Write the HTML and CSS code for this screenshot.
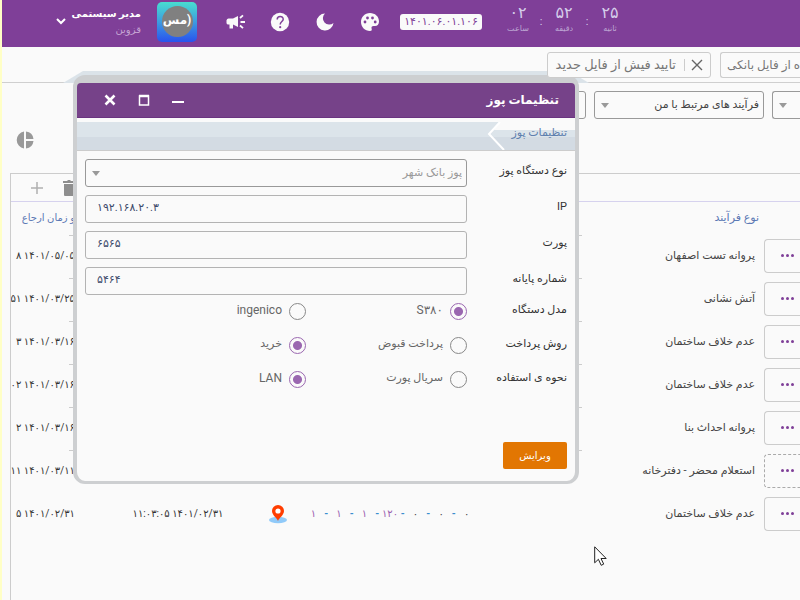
FILE: index.html
```
<!DOCTYPE html>
<html lang="fa" dir="rtl">
<head>
<meta charset="utf-8">
<title>تنظیمات پوز</title>
<link rel="stylesheet" href="styles.css">
</head>
<body>
<header class="topbar">
  <div class="clock">
    <div class="unit"><b>۲۵</b><small>ثانیه</small></div><i>:</i>
    <div class="unit"><b>۵۲</b><small>دقیقه</small></div><i>:</i>
    <div class="unit"><b>۰۲</b><small>ساعت</small></div>
  </div>
  <span class="version" dir="ltr">۱۴۰۱.۰۶.۰۱.۱۰۶</span>
  <nav class="tools">
    <button class="icon" aria-label="پوسته"><svg viewBox="0 0 20 20"><path fill="#fafafa" d="M10 1C4.800 1 1 5 1 10s4 9 9 9c1.600 0 2-1 1.700-2-.7-2 .2-3 1.800-3H15c2.600 0 4-2 4-4.500C19 4.500 15 1 10 1z"/><g fill="#7f3f98"><circle cx="5" cy="10" r="1.400"/><circle cx="7.500" cy="6" r="1.400"/><circle cx="12.500" cy="6" r="1.400"/><circle cx="15.200" cy="10" r="1.400"/></g></svg></button>
    <button class="icon" aria-label="حالت شب"><svg viewBox="0 0 20 20"><path fill="#fafafa" d="M10 1.500A8.500 8.500 0 1 0 18.500 11 5.800 5.800 0 0 1 10 1.500z"/></svg></button>
    <button class="icon" aria-label="راهنما"><svg viewBox="0 0 20 20"><circle cx="10" cy="10" r="9.200" fill="#fafafa"/><path d="M7.200 7.500c0-4 6-3.800 6-.3 0 2.300-3 2.400-3 5.300" fill="none" stroke="#7f3f98" stroke-width="1.500"/><circle cx="10.200" cy="15.200" r="1.100" fill="#7f3f98"/></svg></button>
    <button class="icon" aria-label="اعلان"><svg viewBox="0 0 20 20"><path fill="#fafafa" d="M1.500 8.200Q2 6.500 3.500 6.500H8l5-2.500v11l-5-2.500v4H4.500V12.500h-1Q1.500 12.500 1.500 11z"/><path d="M15.500 10H20M15 6l3-2.600M15 13.500l3 2.600" fill="none" stroke="#fafafa" stroke-width="1.800"/></svg></button>
  </nav>
  <div class="avatar"><span>(مس</span></div>
  <button class="user">
    <span class="who"><strong>مدیر سیستمی</strong><span>قزوین</span></span>
    <svg viewBox="0 0 12 12"><path d="M2 3l4 4 4-4" fill="none" stroke="#fff" stroke-width="2"/></svg>
  </button>
</header>

<div class="tabs">
  <div class="tab cut"><bdi dir="rtl">ه از فایل بانکی</bdi></div>
  <div class="tab">
    <button class="close" aria-label="بستن"><svg viewBox="0 0 12 12"><path d="M1 1l10 10M11 1L1 11" stroke="#666" stroke-width="1.400"/></svg></button>
    <span class="label">تایید فیش از فایل جدید</span>
  </div>
</div>

<main class="page">
  <div class="filters">
    <div class="pick narrow"><select aria-label="وضعیت"><option></option></select></div>
    <div class="pick"><select aria-label="فرآیندها"><option>فرآیند های مرتبط با من</option></select></div>
    <div class="pick"><select aria-label="نوع"><option></option></select></div>
  </div>
  <div class="chart">
    <svg viewBox="0 0 18 18"><path fill="#999" d="M8 .5v17a8.600 8.600 0 0 1 0-17zM10 .5a8.600 8.600 0 0 1 7.500 7.500H10zM10 10h7.500A8.600 8.600 0 0 1 10 17.500z"/></svg>
  </div>
  <section class="grid">
    <div class="gridbar">
      <button aria-label="حذف"><svg viewBox="0 0 16 18"><path fill="#8e8e8e" d="M3 5h10v11q0 1-1 1H4q-1 0-1-1zM2 2h4l1-1h2l1 1h4v2H2z"/></svg></button>
      <button aria-label="افزودن"><svg viewBox="0 0 16 18"><path d="M8 3v12M2 9h12" stroke="#b0b0b0" stroke-width="1.500"/></svg></button>
    </div>
    <table>
      <colgroup><col class="c-act"><col class="c-type"><col class="c-code"><col class="c-map"><col class="c-date"><col></colgroup>
      <thead><tr><th></th><th>نوع فرآیند</th><th></th><th></th><th></th><th class="when">و زمان ارجاع</th></tr></thead>
      <tbody>
        <tr><td class="act"><button aria-label="عملیات"><i></i><i></i><i></i></button></td><td>پروانه تست اصفهان</td><td></td><td></td><td></td><td class="when"><bdi dir="ltr">۸ ۱۴۰۱/۰۵/۰۵</bdi></td></tr>
        <tr><td class="act"><button aria-label="عملیات"><i></i><i></i><i></i></button></td><td>آتش نشانی</td><td></td><td></td><td></td><td class="when"><bdi dir="ltr">۵۱ ۱۴۰۱/۰۳/۲۵</bdi></td></tr>
        <tr><td class="act"><button aria-label="عملیات"><i></i><i></i><i></i></button></td><td>عدم خلاف ساختمان</td><td></td><td></td><td></td><td class="when"><bdi dir="ltr">۳ ۱۴۰۱/۰۳/۱۶</bdi></td></tr>
        <tr><td class="act"><button aria-label="عملیات"><i></i><i></i><i></i></button></td><td>عدم خلاف ساختمان</td><td></td><td></td><td></td><td class="when"><bdi dir="ltr">۰۲ ۱۴۰۱/۰۳/۱۶</bdi></td></tr>
        <tr><td class="act"><button aria-label="عملیات"><i></i><i></i><i></i></button></td><td>پروانه احداث بنا</td><td></td><td></td><td></td><td class="when"><bdi dir="ltr">۲ ۱۴۰۱/۰۳/۱۶</bdi></td></tr>
        <tr><td class="act"><button class="dashed" aria-label="عملیات"><i></i><i></i><i></i></button></td><td>استعلام محضر - دفترخانه</td><td></td><td></td><td></td><td class="when"><bdi dir="ltr">۱۱ ۱۴۰۱/۰۳/۱۱</bdi></td></tr>
        <tr><td class="act"><button aria-label="عملیات"><i></i><i></i><i></i></button></td><td>عدم خلاف ساختمان</td>
          <td class="code"><div dir="ltr"><b>۱</b><i>-</i><b>۱</b><i>-</i><b>۱</b><i>-</i><b>۱۲۰</b><i>-</i><span>۰</span><i>-</i><span>۰</span><i>-</i><span>۰</span></div></td>
          <td class="map"><svg viewBox="0 0 18 20"><ellipse cx="9" cy="16" rx="9" ry="3.200" fill="#90caf9"/><path fill="#ff3d00" d="M9 1a6 6 0 0 0-6 6c0 4 5 7 6 10 1-3 6-6 6-10a6 6 0 0 0-6-6z"/><circle cx="9" cy="7" r="2.600" fill="#fff"/></svg></td>
          <td class="stamp"><bdi dir="ltr">۱۱:۰۳:۰۵ ۱۴۰۱/۰۲/۳۱</bdi></td><td class="when"><bdi dir="ltr">۵ ۱۴۰۱/۰۲/۳۱</bdi></td></tr>
      </tbody>
    </table>
  </section>
</main>

<div class="window" role="dialog" aria-labelledby="title">
  <div class="panel">
    <div class="titlebar">
      <h1 id="title">تنظیمات پوز</h1>
      <div class="winbtns">
        <button aria-label="کوچک"><svg viewBox="0 0 14 14"><path d="M1 9h12" stroke="#fff" stroke-width="2"/></svg></button>
        <button aria-label="بزرگ"><svg viewBox="0 0 14 14"><path d="M2.500 3v9h9V3z" fill="none" stroke="#fff" stroke-width="1.500"/><path d="M2 3h10" stroke="#fff" stroke-width="2.500"/></svg></button>
        <button aria-label="بستن"><svg viewBox="0 0 14 14"><path d="M2.500 2.500l9 9M11.500 2.500l-9 9" stroke="#fff" stroke-width="2.600"/></svg></button>
      </div>
    </div>
    <div class="crumbs"><a href="#">تنظیمات پوز</a><svg viewBox="0 0 18 28"><path fill="#fafafa" d="M12 0h6v8H7z"/><path d="M13 0L2 12l15 16" fill="none" stroke="#fff" stroke-width="2"/></svg></div>
    <form class="form">
      <div class="row"><label for="kind">نوع دستگاه پوز</label><div class="pick"><select id="kind"><option>پوز بانک شهر</option></select></div></div>
      <div class="row"><label for="ip">IP</label><input id="ip" type="text" dir="ltr" value="۱۹۲.۱۶۸.۲۰.۳"></div>
      <div class="row"><label for="port">پورت</label><input id="port" type="text" dir="ltr" value="۶۵۶۵"></div>
      <div class="row"><label for="term">شماره پایانه</label><input id="term" type="text" dir="ltr" value="۵۴۶۴"></div>
      <div class="choices">
        <div class="choice" role="radiogroup" aria-label="مدل دستگاه"><span>مدل دستگاه</span><label><input type="radio" name="model" checked><bdi class="latin" dir="ltr">S۳۸۰</bdi></label><label><input type="radio" name="model"><bdi class="latin">ingenico</bdi></label></div>
        <div class="choice" role="radiogroup" aria-label="روش پرداخت"><span>روش پرداخت</span><label><input type="radio" name="pay"><bdi>پرداخت قبوض</bdi></label><label><input type="radio" name="pay" checked><bdi>خرید</bdi></label></div>
        <div class="choice" role="radiogroup" aria-label="نحوه ی استفاده"><span>نحوه ی استفاده</span><label><input type="radio" name="use"><bdi>سریال پورت</bdi></label><label><input type="radio" name="use" checked><bdi class="latin">LAN</bdi></label></div>
      </div>
      <button type="button" class="edit">ویرایش</button>
    </form>
  </div>
</div>
<svg class="cursor" viewBox="0 0 13 20"><path d="M.7.8v16l3.700-3.500 2.800 6 2.500-1.200-2.700-5.600h5.200z" fill="#fff" stroke="#222" stroke-width="1"/></svg>
</body>
</html>
```
FILE: styles.css
```
* { box-sizing: border-box; }
body {
  margin: 0;
  min-height: 100vh;
  display: flex;
  flex-direction: column;
  position: relative;
  overflow: hidden;
  border-left: 2px solid #ffffc6;
  background: #fafafa;
  color: #444;
  font: 11px/16px Roboto, "DejaVu Sans", sans-serif;
}
button, input, select { font: inherit; color: inherit; margin: 0; }
button { padding: 0; border: 0; background: none; }
svg { display: block; }

.topbar {
  height: 47px;
  display: flex;
  align-items: center;
  flex: none;
  padding: 0 172px 4px 0;
  background: #7f3f98;
  color: #fff;
}
.clock { display: flex; color: #d5cdea; }
.unit { width: 36px; display: flex; flex-direction: column; align-items: center; }
.unit b { font-size: 16px; font-weight: 400; line-height: 18px; }
.unit small { font-size: 8px; line-height: 14px; color: #bda6d3; }
.clock i { width: 10px; text-align: center; font-style: normal; line-height: 36px; }
.version {
  width: 82px;
  height: 16px;
  margin-right: 18px;
  border-radius: 3px;
  background: #fafafa;
  color: #7f3f98;
  font-size: 11px;
  text-align: center;
}
.tools { display: flex; gap: 25px; margin: 0 20px 0 28px; }
.icon, .icon svg { width: 20px; height: 20px; }
.avatar {
  width: 40px;
  height: 40px;
  flex: none;
  display: grid;
  place-items: center;
  border-radius: 5px;
  background: linear-gradient(#48ddcf, #3d9be0 50%, #2952ee);
}
.avatar span {
  width: 31px;
  height: 31px;
  border-radius: 50%;
  background: #808080;
  font-size: 12px;
  font-weight: 700;
  line-height: 29px;
  text-align: center;
}
.user { display: flex; align-items: center; gap: 5px; margin-right: 16px; }
.user svg { width: 12px; height: 12px; }
.who { display: flex; flex-direction: column; text-align: right; font-size: 10px; color: #c5a3d3; }
.who strong { color: #fff; }

.tabs {
  display: flex;
  gap: 9px;
  height: 36px;
  flex: none;
  padding-top: 5px;
  border-bottom: 1px solid #cfcfcf;
}
.tab {
  position: relative;
  z-index: 3;
  height: 26px;
  display: flex;
  align-items: center;
  padding: 0 7px 0 8px;
  border: 1px solid #ccc;
  border-radius: 3px;
  background: #fafafa;
  color: #777;
  font-size: 13px;
  white-space: nowrap;
}
.tab.cut { width: 80px; padding: 0 0 0 6px; direction: ltr; font-size: 12px; border-right: 0; border-radius: 3px 0 0 3px; }
.tab .close { margin-left: 6px; }
.tab .close svg { width: 12px; height: 12px; }
.tab .label { padding-right: 8px; border-right: 1px solid #ccc; line-height: 12px; }

.page { flex: 1; display: flex; flex-direction: column; }
.filters { display: flex; gap: 8px; padding-top: 8px; }
.pick { position: relative; width: 170px; }
.pick::after {
  content: "";
  position: absolute;
  left: 7px;
  top: 12px;
  border: 4px solid transparent;
  border-top: 5px solid #999;
  border-bottom: 0;
}
.pick select, .row input {
  appearance: none;
  display: block;
  width: 100%;
  height: 28px;
  padding: 0 4px 0 18px;
  border: 1px solid #999;
  border-radius: 3px;
  background: #fafafa;
}
.pick.narrow { width: 28px; }
.pick.narrow select { border-right: 0; border-radius: 3px 0 0 3px; }
.chart { align-self: flex-end; margin: 12px 0 0 14px; }
.chart svg { width: 18px; height: 18px; }

.grid { flex: 1; margin: 24px 0 0 8px; border: 1px solid #ccc; border-width: 1px 0 0 1px; overflow: hidden; }
.gridbar {
  height: 28px;
  display: flex;
  justify-content: flex-end;
  align-items: center;
  gap: 16px;
  padding-left: 18px;
  border-bottom: 1px solid #d6d2ee;
}
.gridbar svg { width: 16px; height: 18px; }
table { width: 100%; table-layout: fixed; border-collapse: collapse; }
.c-act { width: 36px; }
.c-type { width: 261px; }
.c-code { width: 200px; }
.c-map { width: 50px; }
.c-date { width: 150px; }
th { height: 32px; padding: 0 5px 0 0; font-weight: 400; color: #5b78b4; text-align: right; white-space: nowrap; }
td { height: 43px; padding: 0 9px 0 0; white-space: nowrap; overflow: hidden; }
th.when, td.when { padding-right: 28px; font-size: 10px; }
td.when, td.stamp { color: #333; font-size: 10px; }
td.stamp { padding: 0; text-align: center; }
td.act { padding: 0; }
.act button {
  width: 100%;
  height: 34px;
  display: flex;
  align-items: center;
  justify-content: flex-end;
  gap: 2px;
  padding-left: 16px;
  border: 1px solid #ccc;
  border-right: 0;
  border-radius: 4px 0 0 4px;
}
.act .dashed { border-style: dashed; border-color: #aaa; }
.act i { width: 3px; height: 3px; border-radius: 50%; background: #7f3f98; }
td.code { padding-right: 30px; }
.code div {
  width: 166px;
  display: grid;
  grid-template-columns: repeat(13, minmax(0, 1fr));
  justify-items: center;
  font-size: 10px;
}
.code b { font-weight: 400; color: #9a5fb0; display: flex; justify-content: center; }
.code i { font-style: normal; font-weight: 700; color: #3a8fcf; }
td.map { padding: 0; }
.map svg { width: 18px; height: 20px; margin: 0 auto; }

.window {
  position: absolute;
  z-index: 2;
  top: 75px;
  left: 71px;
  right: 221px;
}
.window::before {
  content: "";
  position: absolute;
  inset: -4px -10px auto;
  height: 12px;
  background: #dbe3e9;
  clip-path: polygon(20px 0, calc(100% - 20px) 0, 100% 100%, 0 100%);
}
.window::after {
  content: "";
  position: absolute;
  z-index: -1;
  top: 160px;
  right: -3px;
  left: -4px;
  height: 218px;
  background: repeating-linear-gradient(#ccc 0 1px, transparent 1px 43px);
}
.panel {
  position: relative;
  border: solid #cdcfd1;
  border-width: 8px 4px 3px;
  border-radius: 12px;
  background: #fafafa;
}
.titlebar {
  height: 35px;
  display: flex;
  align-items: center;
  justify-content: space-between;
  padding: 0 16px 0 26px;
  border-radius: 4px 4px 0 0;
  border-bottom: 1px solid #6a3480;
  background: #764289;
  color: #fff;
}
h1 { margin: 0; font-size: 12px; }
.winbtns { display: flex; gap: 20px; }
.winbtns svg { width: 14px; height: 14px; }
.crumbs {
  height: 29px;
  display: flex;
  margin-top: 4px;
  padding-right: 8px;
  border-bottom: 1px solid #ccc;
  background:
    linear-gradient(#fafafa, #fafafa) right top / 70px 8px no-repeat,
    linear-gradient(#dce4ea 55%, #d3dbe3 55%);
}
.crumbs a { width: 62px; margin-top: 3px; color: #5e7fae; text-decoration: none; font-size: 11px; white-space: nowrap; }
.crumbs svg { width: 18px; height: 28px; }
.form { display: flex; flex-direction: column; gap: 8px; padding: 8px 8px 12px; }
.row, .choice { display: flex; }
.row > label, .choice > span { width: 100px; flex: none; color: #333; }
.row > label { padding-top: 4px; }
.row .pick { flex: 1; }
.row select { color: #999; opacity: 1; }
.row input { flex: 1; width: auto; min-width: 0; padding: 0 11px 3px; border-color: #b3b3b3; color: #3d4a6b; font-size: 11px; }
.choices { margin-top: -9px; }
.choice { height: 34px; align-items: center; }
.choice > span, .choice bdi { padding-bottom: 2px; }
.choice .latin { font-size: 12px; }
.choice label { width: 161px; display: flex; align-items: center; gap: 7px; color: #666; white-space: nowrap; }
.choice input {
  appearance: none;
  width: 17px;
  height: 17px;
  flex: none;
  border: 1px solid #888;
  border-radius: 50%;
}
.choice input:checked { border-color: #9a67b0; background: radial-gradient(circle, #9a67b0 4px, transparent 5px); }
.edit {
  width: 64px;
  height: 27px;
  margin-top: 38px;
  border-radius: 2px;
  background: #e27602;
  color: #fff;
  font-size: 10px;
}
.cursor { position: absolute; z-index: 4; left: 592px; top: 546px; width: 13px; height: 20px; }
```
